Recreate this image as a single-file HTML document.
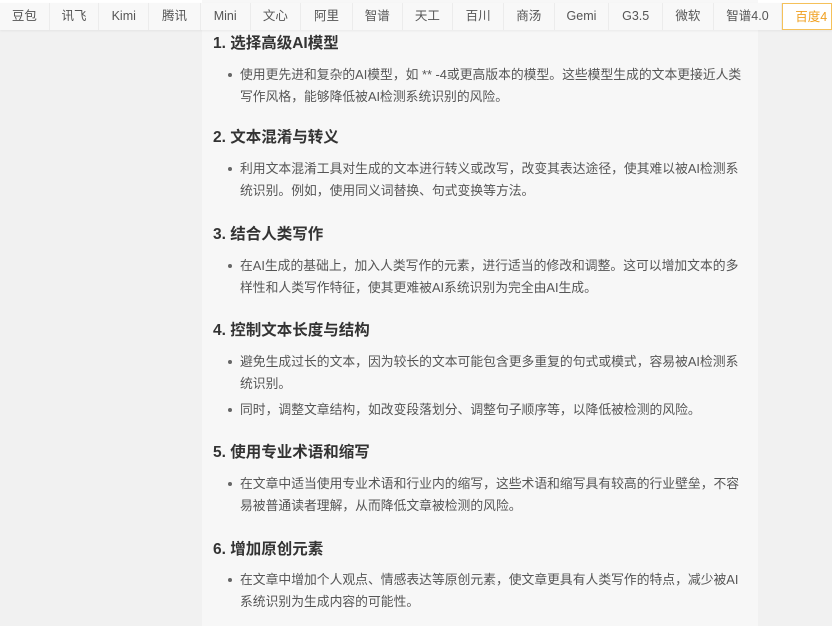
<!DOCTYPE html>
<html><head><meta charset="utf-8"><style>
*{margin:0;padding:0;box-sizing:border-box}
body{width:832px;height:626px;overflow:hidden;background:#f1f1f1;font-family:"Liberation Sans","Noto Sans CJK SC",sans-serif;position:relative}
.panel{position:absolute;left:202px;top:0;width:556px;height:626px;background:#f7f7f7}
.top{position:absolute;left:0;top:0;width:832px;height:4px;background:#fff}
.tabs{position:absolute;left:0;top:3px;height:27px;width:832px;background:#f8f8f8;display:flex;box-shadow:0 1px 2px rgba(0,0,0,.06)}
.tabs div{height:27px;line-height:27px;text-align:center;font-size:12.5px;color:#555;border-right:1px solid #ececec}
.tabs .on{border:1px solid #f5c15a;color:#f0a020;background:#fff;text-align:left;padding-left:12px}
h2{position:absolute;left:213px;font-size:15.5px;font-weight:bold;color:#333}
p{position:absolute;left:240px;font-size:12.8px;color:#555;line-height:22px;width:506px}
p:before{content:"";position:absolute;left:-12px;top:9px;width:4px;height:4px;border-radius:50%;background:#666}
</style></head><body>
<div class="top"></div>
<div class="panel"></div>
<div class="tabs">
<div style="width:50px">豆包</div><div style="width:50px">讯飞</div><div style="width:50px">Kimi</div><div style="width:52px">腾讯</div><div style="width:50px">Mini</div><div style="width:51px">文心</div><div style="width:52px">阿里</div><div style="width:50px">智谱</div><div style="width:51px">天工</div><div style="width:51px">百川</div><div style="width:51px">商汤</div><div style="width:55px">Gemi</div><div style="width:54px">G3.5</div><div style="width:51px">微软</div><div style="width:69px">智谱4.0</div><div class="on" style="width:50px">百度4</div>
</div>
<h2 style="top:31px">1. 选择高级AI模型</h2>
<p style="top:64px">使用更先进和复杂的AI模型，如 ** -4或更高版本的模型。这些模型生成的文本更接近人类<br>写作风格，能够降低被AI检测系统识别的风险。</p>
<h2 style="top:125px">2. 文本混淆与转义</h2>
<p style="top:158px">利用文本混淆工具对生成的文本进行转义或改写，改变其表达途径，使其难以被AI检测系<br>统识别。例如，使用同义词替换、句式变换等方法。</p>
<h2 style="top:222px">3. 结合人类写作</h2>
<p style="top:255px">在AI生成的基础上，加入人类写作的元素，进行适当的修改和调整。这可以增加文本的多<br>样性和人类写作特征，使其更难被AI系统识别为完全由AI生成。</p>
<h2 style="top:318px">4. 控制文本长度与结构</h2>
<p style="top:351px">避免生成过长的文本，因为较长的文本可能包含更多重复的句式或模式，容易被AI检测系<br>统识别。</p>
<p style="top:399px">同时，调整文章结构，如改变段落划分、调整句子顺序等，以降低被检测的风险。</p>
<h2 style="top:440px">5. 使用专业术语和缩写</h2>
<p style="top:473px">在文章中适当使用专业术语和行业内的缩写，这些术语和缩写具有较高的行业壁垒，不容<br>易被普通读者理解，从而降低文章被检测的风险。</p>
<h2 style="top:537px">6. 增加原创元素</h2>
<p style="top:569px">在文章中增加个人观点、情感表达等原创元素，使文章更具有人类写作的特点，减少被AI<br>系统识别为生成内容的可能性。</p>
</body></html>
